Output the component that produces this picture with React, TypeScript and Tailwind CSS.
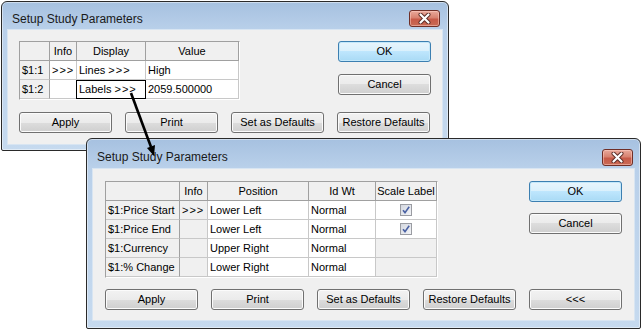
import React from 'react';

type Cell = { t?: React.ReactNode; kind?: 'data' | 'gray' | 'check' | 'focus' };
type Row = { head: string; cells: Cell[] };

const base =
  'relative flex h-[19px] items-center whitespace-nowrap border-r border-b text-[11px] leading-[18px] text-black';

function Arrows() {
  return <span className="tracking-[1px]">&gt;&gt;&gt;</span>;
}

function CheckBox() {
  return (
    <svg width="12" height="12" viewBox="0 0 12 12">
      <defs>
        <linearGradient id="cb" x1="0" y1="0" x2="1" y2="1">
          <stop offset="0" stopColor="#d2d6de" />
          <stop offset="1" stopColor="#f4f5f8" />
        </linearGradient>
      </defs>
      <rect x="0.5" y="0.5" width="11" height="11" fill="url(#cb)" stroke="#9a9ca2" />
      <path d="M3 6.2 L5 8.6 L9.2 2.8" fill="none" stroke="#4a61a3" strokeWidth="1.6" />
    </svg>
  );
}

function ParamGrid({ cols, headers, rows }: { cols: string; headers: string[]; rows: Row[] }) {
  const hd = `${base} justify-center bg-[#f0f0f0] border-[#a0a0a0]`;
  const rh = `${base} pl-[2px] bg-[#f0f0f0] border-r-[#a0a0a0] border-b-[#c8c8c8]`;
  return (
    <div className={`grid ${cols} border border-t-[#a0a0a0] border-l-[#a0a0a0] border-r-white border-b-white`}>
      <div className={hd} />
      {headers.map((h) => (
        <div key={h} className={hd}>
          {h}
        </div>
      ))}
      {rows.map((r) => (
        <React.Fragment key={r.head}>
          <div className={rh}>{r.head}</div>
          {r.cells.map((c, i) => {
            if (c.kind === 'check')
              return (
                <div key={i} className={`${base} justify-center bg-white border-[#c8c8c8]`}>
                  <CheckBox />
                </div>
              );
            if (c.kind === 'gray')
              return (
                <div key={i} className={`${base} pl-[2px] bg-[#f0f0f0] border-[#c8c8c8]`}>
                  <span>{c.t}</span>
                </div>
              );
            return (
              <div key={i} className={`${base} pl-[2px] bg-white border-[#c8c8c8]`}>
                <span>{c.t}</span>
                {c.kind === 'focus' && (
                  <span className="absolute -left-px top-0 -right-px -bottom-px border border-black" />
                )}
              </div>
            );
          })}
        </React.Fragment>
      ))}
    </div>
  );
}

function Button({ label, primary }: { label: React.ReactNode; primary?: boolean }) {
  return (
    <div
      className={
        primary
          ? 'flex h-[21px] w-[93px] shrink-0 items-center justify-center rounded-[3px] border border-[#3c7fb1] bg-[linear-gradient(to_bottom,#e8f5fc_0%,#d9f0fc_50%,#bee6fd_50%,#a9daf5_100%)] text-[11px] text-black shadow-[inset_0_0_0_1px_#c4e8fa]'
          : 'flex h-[21px] w-[93px] shrink-0 items-center justify-center rounded-[3px] border border-[#707070] bg-[linear-gradient(to_bottom,#f2f2f2_0%,#ebebeb_50%,#dddddd_50%,#cfcfcf_100%)] text-[11px] text-black shadow-[inset_0_0_0_1px_#fbfbfb]'
      }
    >
      {label}
    </div>
  );
}

function CloseButton({ className }: { className: string }) {
  return (
    <div
      className={`flex h-[17px] w-[31px] items-center justify-center rounded-[3px] border border-[#6f2f27] bg-[linear-gradient(to_bottom,#e9a99b_0%,#d88270_45%,#c75a48_55%,#c96b55_100%)] shadow-[inset_0_0_0_1px_rgba(255,210,200,0.5)] ${className}`}
    >
      <svg width="13" height="11" viewBox="0 0 13 11">
        <path d="M2.5 1.5 L10.5 9.5 M10.5 1.5 L2.5 9.5" stroke="#5a2a24" strokeWidth="4" strokeLinecap="round" />
        <path d="M2.5 1.5 L10.5 9.5 M10.5 1.5 L2.5 9.5" stroke="#ffffff" strokeWidth="2.2" strokeLinecap="round" />
      </svg>
    </div>
  );
}

export default function App() {
  return (
    <div className="relative h-[329px] w-[642px] overflow-hidden bg-white font-['Liberation_Sans',Arial,sans-serif]">
      {/* first dialog */}
      <div className="absolute left-[1px] top-[1px] flex h-[150px] w-[448px] flex-col rounded-t-[6px] rounded-b-[2px] border border-[#2a2a2a] bg-[linear-gradient(to_bottom,#a6c1e0_0px,#b9d0ea_28px,#c6daef_100%)] px-[5px] pb-[5px] shadow-[inset_0_0_0_1px_rgba(255,255,255,0.45)]">
        <div className="flex h-[27px] shrink-0 items-start justify-between">
          <span className="pl-[5px] pt-[10px] text-[12px] leading-[15px] text-[#1a1a1a]">Setup Study Parameters</span>
          <CloseButton className="mt-[8px] mr-[3px]" />
        </div>
        <div className="flex-1 border border-[#d8e5f2] bg-[#f0f0f0] px-[11px] pt-[11px]">
          <div className="flex items-start justify-between">
            <ParamGrid
              cols="grid-cols-[30px_27px_69px_93px]"
              headers={['Info', 'Display', 'Value']}
              rows={[
                { head: '$1:1', cells: [{ t: <Arrows /> }, { t: <>Lines <Arrows /></> }, { t: 'High' }] },
                { head: '$1:2', cells: [{}, { t: <>Labels <Arrows /></>, kind: 'focus' }, { t: '2059.500000' }] },
              ]}
            />
            <div className="flex flex-col gap-[12px]">
              <Button label="OK" primary />
              <Button label="Cancel" />
            </div>
          </div>
          <div className="mt-[12px] flex gap-[13px]">
            <Button label="Apply" />
            <Button label="Print" />
            <Button label="Set as Defaults" />
            <Button label="Restore Defaults" />
          </div>
        </div>
      </div>

      {/* second dialog */}
      <div className="absolute left-[86px] top-[138px] flex h-[191px] w-[555px] flex-col rounded-t-[6px] rounded-b-[2px] border border-[#2a2a2a] bg-[linear-gradient(to_bottom,#a6c1e0_0px,#b9d0ea_29px,#c6daef_100%)] px-[5px] pb-[7px] shadow-[inset_0_0_0_1px_rgba(255,255,255,0.45)]">
        <div className="flex h-[29px] shrink-0 items-start justify-between">
          <span className="pl-[5px] pt-[11px] text-[12px] leading-[15px] text-[#1a1a1a]">Setup Study Parameters</span>
          <CloseButton className="mt-[10px] mr-[2px]" />
        </div>
        <div className="flex-1 border border-[#d8e5f2] bg-[#f0f0f0] px-[12px] pt-[12px]">
          <div className="flex items-start justify-between">
            <ParamGrid
              cols="grid-cols-[74px_28px_101px_67px_61px]"
              headers={['Info', 'Position', 'Id Wt', 'Scale Label']}
              rows={[
                {
                  head: '$1:Price Start',
                  cells: [{ t: <Arrows />, kind: 'gray' }, { t: 'Lower Left' }, { t: 'Normal' }, { kind: 'check' }],
                },
                {
                  head: '$1:Price End',
                  cells: [{ kind: 'gray' }, { t: 'Lower Left' }, { t: 'Normal' }, { kind: 'check' }],
                },
                {
                  head: '$1:Currency',
                  cells: [{ kind: 'gray' }, { t: 'Upper Right' }, { t: 'Normal' }, { kind: 'gray' }],
                },
                {
                  head: '$1:% Change',
                  cells: [{ kind: 'gray' }, { t: 'Lower Right' }, { t: 'Normal' }, { kind: 'gray' }],
                },
              ]}
            />
            <div className="flex flex-col gap-[11px]">
              <Button label="OK" primary />
              <Button label="Cancel" />
            </div>
          </div>
          <div className="mt-[11px] flex gap-[13px]">
            <Button label="Apply" />
            <Button label="Print" />
            <Button label="Set as Defaults" />
            <Button label="Restore Defaults" />
            <Button label="<<<" />
          </div>
        </div>
      </div>

      {/* callout arrow */}
      <svg className="pointer-events-none absolute left-0 top-0" width="642" height="329" viewBox="0 0 642 329">
        <line x1="131" y1="93" x2="151" y2="147" stroke="#000" strokeWidth="2.6" />
        <polygon points="154,156 155,145 147,148" fill="#000" />
      </svg>
    </div>
  );
}
